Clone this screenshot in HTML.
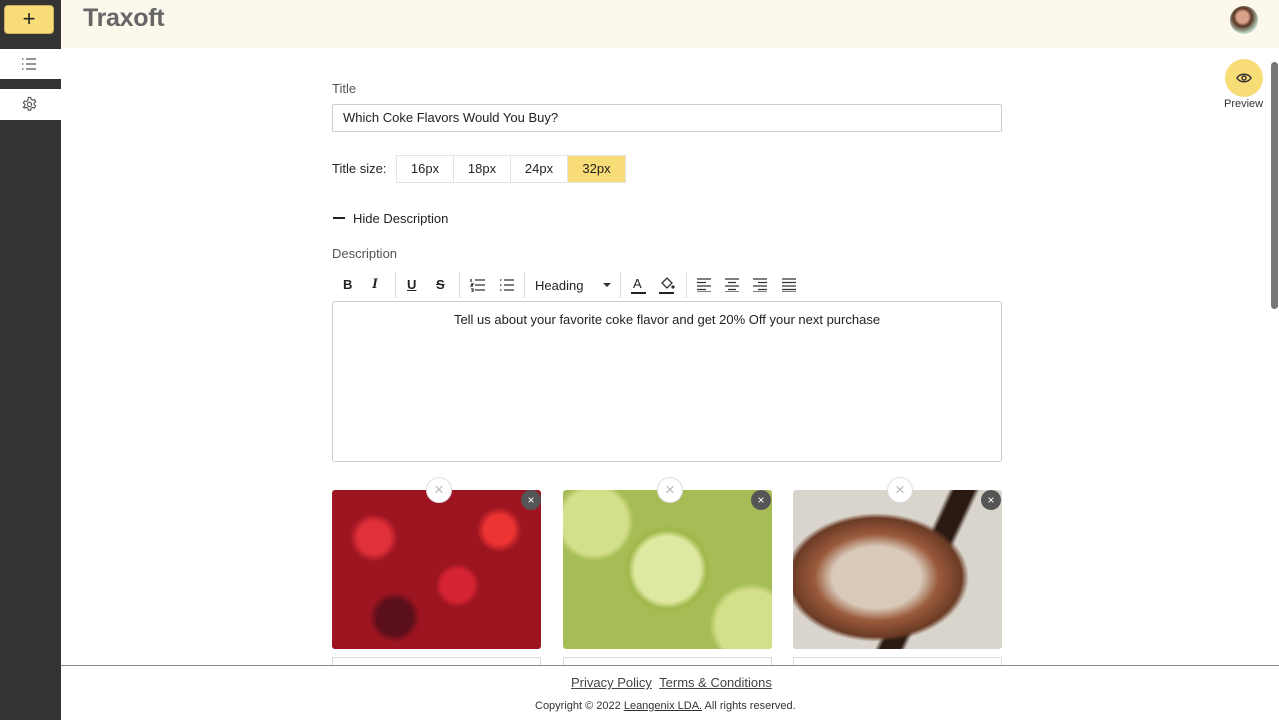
<!DOCTYPE html>
<html><head><meta charset="utf-8"><style>
*{box-sizing:border-box;margin:0;padding:0}
body{width:1279px;height:720px;overflow:hidden;font-family:"Liberation Sans",Arial,sans-serif;background:#fff;position:relative;color:#222}
.abs{position:absolute}
.sb{left:0;top:0;width:61px;height:720px;background:#333}
.hdr{left:61px;top:0;width:1218px;height:48px;background:#fcf8ec}
.lbl{font-size:13px;color:#555}
.sz{display:flex;position:absolute;left:396px;top:155px;height:28px;border:1px solid #e3e3e3}
.sz div{width:57px;text-align:center;line-height:26px;font-size:13px;border-right:1px solid #e3e3e3}
.sz div:last-child{border:none;background:#f8dc77}
.tb{font-size:13px;color:#222}
.sep{position:absolute;top:272px;width:1px;height:26px;background:#ddd}
.img{top:490px;width:209px;height:159px;border-radius:3px}
.xc{width:26px;height:26px;border-radius:50%;background:#fff;border:1px solid #ddd;color:#bbb;text-align:center;line-height:24px;font-size:17px}
.xd{width:20px;height:20px;border-radius:50%;background:#555;color:#fff;text-align:center;line-height:20px;font-size:12px}
.cap{top:657px;width:209px;height:10px;border:1px solid #ddd;border-bottom:none}
</style></head><body>
<div class="abs sb"></div>
<div class="abs" style="left:4px;top:5px;width:50px;height:29px;background:#f8dc77;border-radius:4px;border:1px solid #c9b060;text-align:center;font-size:22px;line-height:26px">+</div>
<div class="abs" style="left:0;top:49px;width:61px;height:30px;background:#fff"></div>
<svg class="abs" style="left:21px;top:57px" width="16" height="14" fill="none" stroke="#555" stroke-width="1.3"><path d="M5 2h10M5 7h10M5 12h10M1 2h1.5M1 7h1.5M1 12h1.5"/></svg>
<div class="abs" style="left:0;top:89px;width:61px;height:31px;background:#fff"></div>
<svg class="abs" style="left:21px;top:96px" width="17" height="17" viewBox="0 0 24 24" fill="none" stroke="#555" stroke-width="1.6"><circle cx="12" cy="12" r="3"/><path d="M10.3 2h3.4l.6 2.8 2 1.1 2.7-.9 1.7 2.9-2.1 1.9v2.4l2.1 1.9-1.7 2.9-2.7-.9-2 1.1-.6 2.8h-3.4l-.6-2.8-2-1.1-2.7.9L3.3 16l2.1-1.9v-2.4L3.3 9.8 5 6.9l2.7.9 2-1.1z"/></svg>
<div class="abs hdr"></div>
<div class="abs" style="left:83px;top:4px;font-size:25px;color:#666;font-weight:bold;letter-spacing:-0.3px">Traxoft</div>
<div class="abs" style="left:1230px;top:6px;width:28px;height:28px;border-radius:50%;background:radial-gradient(circle at 45% 40%,#d8a38a 0 25%,#5a3424 40%,#b9d8c4 70%,#ddd 100%)"></div>
<div class="abs" style="left:1225px;top:59px;width:38px;height:38px;border-radius:50%;background:#f8dc77"></div>
<svg class="abs" style="left:1236px;top:72px" width="16" height="12" fill="none" stroke="#333" stroke-width="1.4"><path d="M1 6C4 1 12 1 15 6C12 11 4 11 1 6Z"/><circle cx="8" cy="6" r="2"/></svg>
<div class="abs" style="left:1224px;top:98px;font-size:11px;color:#333">Preview</div>
<div class="abs" style="left:1271px;top:62px;width:7px;height:247px;background:#777;border-radius:4px"></div>

<div class="abs lbl" style="left:332px;top:81px">Title</div>
<div class="abs" style="left:332px;top:104px;width:670px;height:28px;border:1px solid #ccc;border-radius:2px;font-size:13px;padding-left:10px;line-height:26px">Which Coke Flavors Would You Buy?</div>
<div class="abs" style="left:332px;top:161px;font-size:13px">Title size:</div>
<div class="sz"><div>16px</div><div>18px</div><div>24px</div><div>32px</div></div>
<div class="abs" style="left:333px;top:217px;width:12px;height:2px;background:#222"></div>
<div class="abs" style="left:353px;top:211px;font-size:13px">Hide Description</div>
<div class="abs lbl" style="left:332px;top:246px">Description</div>

<div class="abs tb" style="left:343px;top:277px;font-weight:bold">B</div>
<div class="abs tb" style="left:372px;top:276px;font-style:italic;font-weight:bold;font-family:'Liberation Serif',serif;font-size:15px">I</div>
<div class="sep" style="left:395px"></div>
<div class="abs tb" style="left:407px;top:277px;text-decoration:underline;font-weight:bold">U</div>
<div class="abs tb" style="left:436px;top:277px;text-decoration:line-through;font-weight:bold">S</div>
<div class="sep" style="left:459px"></div>
<svg class="abs" style="left:470px;top:278px" width="16" height="14" fill="none" stroke="#333" stroke-width="1.3"><path d="M5 2h10M5 7h10M5 12h10M1 1v3M1 6h2l-2 2h2M1 11h2v3H1"/></svg>
<svg class="abs" style="left:499px;top:278px" width="16" height="14" fill="none" stroke="#333" stroke-width="1.3"><path d="M5 2h10M5 7h10M5 12h10M1 2h1.5M1 7h1.5M1 12h1.5"/></svg>
<div class="sep" style="left:524px"></div>
<div class="abs tb" style="left:535px;top:278px">Heading</div>
<div class="abs" style="left:603px;top:283px;border:4px solid transparent;border-top:4px solid #333"></div>
<div class="sep" style="left:620px"></div>
<div class="abs tb" style="left:633px;top:276px">A</div>
<div class="abs" style="left:631px;top:292px;width:15px;height:2px;background:#222"></div>
<svg class="abs" style="left:659px;top:276px" width="16" height="14" fill="none" stroke="#333" stroke-width="1.3"><path d="M3 7l5-5 5 5-5 5z"/><circle cx="14" cy="11" r="1" fill="#333"/></svg>
<div class="abs" style="left:659px;top:292px;width:15px;height:2px;background:#222"></div>
<div class="sep" style="left:686px"></div>
<svg class="abs" style="left:696px;top:278px" width="110" height="14" fill="none" stroke="#333" stroke-width="1.3"><path d="M1 1h14M1 4.5h9M1 8h14M1 11.5h9M1 14h14"/><path d="M29 1h14M32 4.5h8M29 8h14M32 11.5h8M29 14h14"/><path d="M57 1h14M62 4.5h9M57 8h14M62 11.5h9M57 14h14"/><path d="M86 1h14M86 4.5h14M86 8h14M86 11.5h14M86 14h14"/></svg>
<div class="abs" style="left:332px;top:301px;width:670px;height:161px;border:1px solid #ccc;border-radius:3px"></div>
<div class="abs" style="left:332px;top:312px;width:670px;text-align:center;font-size:13px">Tell us about your favorite coke flavor and get 20% Off your next purchase</div>

<div class="abs img" style="left:332px;background:radial-gradient(circle at 20% 30%,#e0303a 0 8%,transparent 12%),radial-gradient(circle at 60% 60%,#d62333 0 10%,transparent 14%),radial-gradient(circle at 80% 25%,#e33 0 7%,transparent 11%),radial-gradient(circle at 30% 80%,#5a0f1a 0 9%,transparent 13%),#9c1520"></div>
<div class="abs img" style="left:563px;background:radial-gradient(circle at 50% 50%,#dfe8a0 0 25%,#9fb84a 30%,transparent 34%),radial-gradient(circle at 15% 20%,#d4df8a 0 15%,transparent 18%),radial-gradient(circle at 90% 85%,#d4df8a 0 15%,transparent 18%),#a6bd55"></div>
<div class="abs img" style="left:793px;background:radial-gradient(ellipse at 40% 55%,#d8c9b8 0 25%,#9a5a3c 35%,#6b3b25 48%,transparent 52%),linear-gradient(115deg,transparent 55%,#2a1a12 57% 64%,transparent 66%),#d9d4cc"></div>
<div class="abs xc" style="left:426px;top:477px">×</div>
<div class="abs xc" style="left:657px;top:477px">×</div>
<div class="abs xc" style="left:887px;top:477px">×</div>
<div class="abs xd" style="left:521px;top:490px">×</div>
<div class="abs xd" style="left:751px;top:490px">×</div>
<div class="abs xd" style="left:981px;top:490px">×</div>
<div class="abs cap" style="left:332px"></div>
<div class="abs cap" style="left:563px"></div>
<div class="abs cap" style="left:793px"></div>

<div class="abs" style="left:61px;top:665px;width:1218px;height:55px;background:#fff;border-top:1px solid #888"></div>
<div class="abs" style="left:571px;top:675px;font-size:13px;color:#444"><span style="text-decoration:underline">Privacy Policy</span>&nbsp;&nbsp;<span style="text-decoration:underline">Terms &amp; Conditions</span></div>
<div class="abs" style="left:535px;top:700px;font-size:11px;color:#333">Copyright © 2022 <span style="text-decoration:underline">Leangenix LDA.</span> All rights reserved.</div>
</body></html>
